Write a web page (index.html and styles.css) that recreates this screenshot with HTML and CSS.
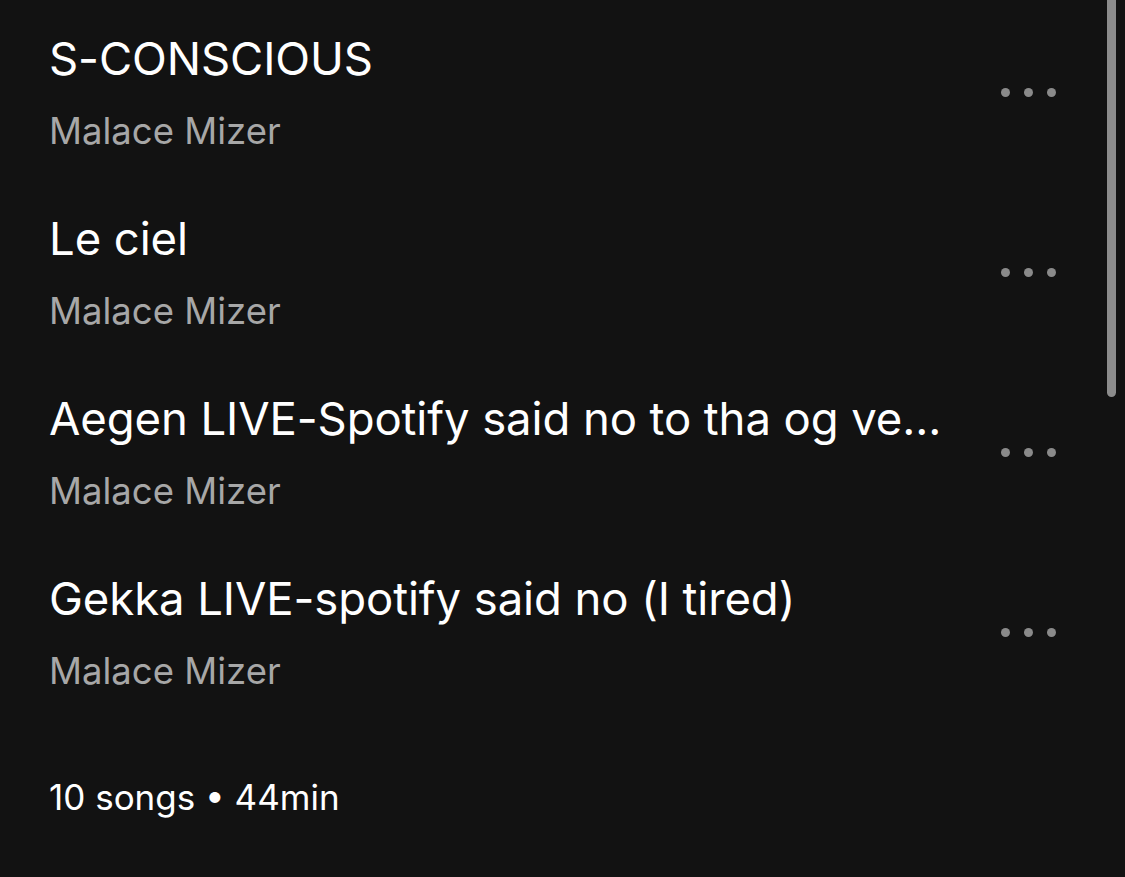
FILE: index.html
```html
<!DOCTYPE html>
<html lang="en">
<head>
    <meta charset="UTF-8">
    <meta name="viewport" content="width=device-width, initial-scale=1.0">
    <title>Playlist</title>
    <link rel="stylesheet" href="styles.css">
</head>
<body>

    <div class="tracklist">
        <!-- Track rows -->
        <div class="track">
            <div class="track-info">
                <div class="track-title">S-CONSCIOUS</div>
                <div class="track-artist">Malace Mizer</div>
            </div>
            <div class="more-btn"><span></span><span></span><span></span></div>
        </div>
        <div class="track">
            <div class="track-info">
                <div class="track-title">Le ciel</div>
                <div class="track-artist">Malace Mizer</div>
            </div>
            <div class="more-btn"><span></span><span></span><span></span></div>
        </div>
        <div class="track">
            <div class="track-info">
                <div class="track-title">Aegen LIVE-Spotify said no to tha og ve...</div>
                <div class="track-artist">Malace Mizer</div>
            </div>
            <div class="more-btn"><span></span><span></span><span></span></div>
        </div>
        <div class="track">
            <div class="track-info">
                <div class="track-title">Gekka LIVE-spotify said no (I tired)</div>
                <div class="track-artist">Malace Mizer</div>
            </div>
            <div class="more-btn"><span></span><span></span><span></span></div>
        </div>

        <div class="summary">10 songs &bull; 44min</div>

        <!-- Scrollbar thumb -->
        <div class="scroll-thumb"></div>
    </div>

</body>
</html>
```

FILE: styles.css
```css
body {
    font-family: Inter, "Noto Sans", sans-serif;
    margin: 0;
    padding: 0;
    background-color: #121212;
    color: #fff;
}

.tracklist {
    position: relative;
    height: 877px;
    overflow: hidden;
}

.track {
    display: flex;
    align-items: center;
    height: 180px;
    padding: 0 69px 0 49px;
}

.track-info {
    flex: 1;
    min-width: 0;
    padding-top: 4px;
}

.track-title {
    font-size: 45.5px;
    line-height: 56px;
    letter-spacing: -0.1px;
    color: #fff;
    white-space: nowrap;
}

.track-artist {
    margin-top: 22px;
    font-size: 36.5px;
    line-height: 44px;
    color: #a7a7a7;
}

/* More button */
.more-btn {
    display: flex;
    gap: 14px;
    margin-top: 4px;
}

.more-btn span {
    width: 9px;
    height: 9px;
    border-radius: 50%;
    background-color: #8a8a8a;
}

.summary {
    padding: 56px 49px 0;
    font-size: 35px;
    line-height: 42px;
    color: #fff;
}

.scroll-thumb {
    position: absolute;
    top: 0;
    left: 1107px;
    width: 9px;
    height: 397px;
    border-radius: 0 0 5px 5px;
    background-color: #8c8c8c;
}
```
